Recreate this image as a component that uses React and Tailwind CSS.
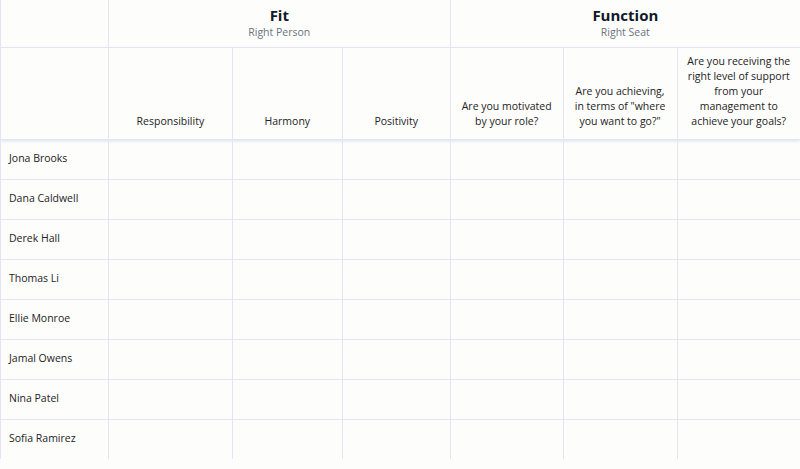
import React from "react";

const people = [
  "Jona Brooks",
  "Dana Caldwell",
  "Derek Hall",
  "Thomas Li",
  "Ellie Monroe",
  "Jamal Owens",
  "Nina Patel",
  "Sofia Ramirez",
];

const questions = [
  "Responsibility",
  "Harmony",
  "Positivity",
  "Are you motivated by your role?",
  'Are you achieving, in terms of "where you want to go?"',
  "Are you receiving the right level of support from your management to achieve your goals?",
];

const widths = ["w-[124px]", "w-[110px]", "w-[108px]", "w-[113px]", "w-[114px]", "w-[123px]"];

export default function App() {
  return (
    <div className="h-[469px] w-[800px] bg-[#fdfdfc] font-['Open_Sans',sans-serif] text-[#232323]">
      <table className="table-fixed border-collapse">
        <thead>
          <tr className="h-[47px]">
            <th className="w-[108px] border-l border-r border-b border-[#e3e5f3]"></th>
            <th colSpan={3} className="border-r border-b border-[#e3e5f3] align-top pt-[5px]">
              <div className="text-[15px] font-bold leading-[20px] text-[#111827]">Fit</div>
              <div className="text-[10.5px] font-normal leading-[14px] text-[#6b7280]">Right Person</div>
            </th>
            <th colSpan={3} className="border-b border-[#e3e5f3] align-top pt-[5px]">
              <div className="text-[15px] font-bold leading-[20px] text-[#111827]">Function</div>
              <div className="text-[10.5px] font-normal leading-[14px] text-[#6b7280]">Right Seat</div>
            </th>
          </tr>
          <tr className="h-[92px] shadow-[0_2px_3px_rgba(180,185,210,0.45)]">
            <th className="border-l border-r border-b border-[#e3e5f3]"></th>
            {questions.map((q, i) => (
              <th
                key={q}
                className={`${widths[i]} border-r border-b border-[#e3e5f3] align-bottom px-[8px] pb-[10px] text-[10.5px] font-normal leading-[15px] text-[#232323] ${i === 5 ? "border-r-0" : ""}`}
              >
                {q}
              </th>
            ))}
          </tr>
        </thead>
        <tbody>
          {people.map((p, r) => (
            <tr key={p} className="h-[40px]">
              <td className={`border-l border-r border-[#e3e5f3] pl-[8px] text-[10.5px] ${r < 7 ? "border-b" : ""}`}>{p}</td>
              {questions.map((q, i) => (
                <td
                  key={q}
                  className={`border-[#e3e5f3] ${i < 5 ? "border-r" : ""} ${r < 7 ? "border-b" : ""}`}
                ></td>
              ))}
            </tr>
          ))}
        </tbody>
      </table>
    </div>
  );
}
